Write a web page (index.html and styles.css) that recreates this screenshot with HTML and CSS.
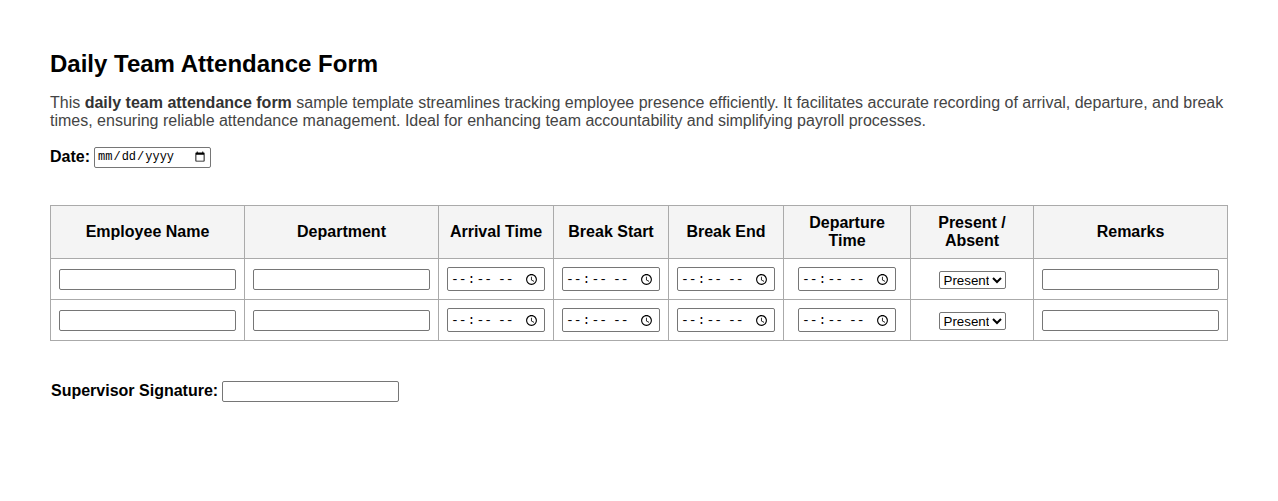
FILE: index.html
```html
<!DOCTYPE html>
<html lang="en">
<head>
<meta charset="utf-8">
<title>Daily Team Attendance Form</title>
<link rel="stylesheet" href="styles.css">
</head>
<body>
<div class="page">
  <h1 class="title">Daily Team Attendance Form</h1>
  <p class="intro">This <strong>daily team attendance form</strong> sample template streamlines tracking employee presence efficiently. It facilitates accurate recording of arrival, departure, and break times, ensuring reliable attendance management. Ideal for enhancing team accountability and simplifying payroll processes.</p>
  <div class="date-row">
    <label class="lbl" for="d">Date:</label>
    <input class="date-in" id="d" type="date">
  </div>
  <table class="grid">
    <thead>
      <tr>
        <th class="w-wide">Employee Name</th>
        <th class="w-wide">Department</th>
        <th class="w-time">Arrival Time</th>
        <th class="w-time">Break Start</th>
        <th class="w-time">Break End</th>
        <th class="w-dep">Departure Time</th>
        <th class="w-pres">Present / Absent</th>
        <th class="w-wide">Remarks</th>
      </tr>
    </thead>
    <tbody>
      <tr>
        <td><input class="txt" type="text"></td>
        <td><input class="txt" type="text"></td>
        <td><input class="tm" type="time"></td>
        <td><input class="tm" type="time"></td>
        <td><input class="tm" type="time"></td>
        <td><input class="tm" type="time"></td>
        <td><select class="sel"><option>Present</option><option>Absent</option></select></td>
        <td><input class="txt" type="text"></td>
      </tr>
      <tr>
        <td><input class="txt" type="text"></td>
        <td><input class="txt" type="text"></td>
        <td><input class="tm" type="time"></td>
        <td><input class="tm" type="time"></td>
        <td><input class="tm" type="time"></td>
        <td><input class="tm" type="time"></td>
        <td><select class="sel"><option>Present</option><option>Absent</option></select></td>
        <td><input class="txt" type="text"></td>
      </tr>
    </tbody>
  </table>
  <div class="sig-row">
    <label class="lbl" for="s">Supervisor Signature:</label>
    <input class="sig-in" id="s" type="text">
  </div>
</div>
</body>
</html>
```
FILE: styles.css
```css
html, body {
  margin: 0;
  padding: 0;
  background: #fff;
}
body {
  font-family: "Liberation Sans", Arial, sans-serif;
  color: #000;
}
.page {
  padding: 50px 50px 0 50px;
}
.title {
  font-size: 24px;
  font-weight: bold;
  margin: 0 0 16px 0;
  line-height: 27.6px;
}
.intro {
  font-size: 16px;
  line-height: 18.4px;
  color: #444;
  margin: 0 0 16px 0;
}
.intro strong {
  color: #333;
}
.date-row {
  display: flex;
  align-items: center;
  gap: 4px;
  height: 22px;
}
.lbl {
  font-size: 16px;
  font-weight: bold;
}
input, select {
  font-family: "Liberation Sans", Arial, sans-serif;
  font-size: 13.333px;
  box-sizing: border-box;
  margin: 0;
  border: 1px solid #767676;
  border-radius: 2px;
  background: #fff;
  color: #000;
}
.date-in {
  width: 117px;
  height: 21px;
  padding: 1px 2px;
  font-family: "Liberation Mono", monospace;
  font-size: 12px;
}
.grid {
  margin-top: 37px;
  width: 1178px;
  border-collapse: collapse;
  font-size: 16px;
}
.grid th, .grid td {
  border: 1px solid #aaa;
  padding: 8px;
  text-align: center;
  vertical-align: middle;
}
.grid th {
  background: #f4f4f4;
  font-weight: bold;
  line-height: 18px;
}
.grid td {
  height: 24px;
}
.w-wide { width: 177px; }
.w-time { width: 98px; }
.w-dep { width: 110px; }
.w-pres { width: 106px; }
.txt {
  display: block;
  width: 100%;
  height: 21px;
  padding: 1px 2px;
}
.tm {
  width: 98px;
  height: 24px;
  padding: 1px 2px;
  font-family: "Liberation Mono", monospace;
  font-size: 13px;
  vertical-align: middle;
}
.sel {
  width: 67px;
  height: 18px;
  padding: 0;
  font-size: 13.333px;
  vertical-align: middle;
}
.sig-row {
  margin-top: 38px;
  display: flex;
  align-items: center;
  gap: 4px;
  padding-left: 1px;
}
.sig-in {
  width: 177px;
  height: 21px;
  padding: 1px 2px;
  margin-top: 2px;
}
```
